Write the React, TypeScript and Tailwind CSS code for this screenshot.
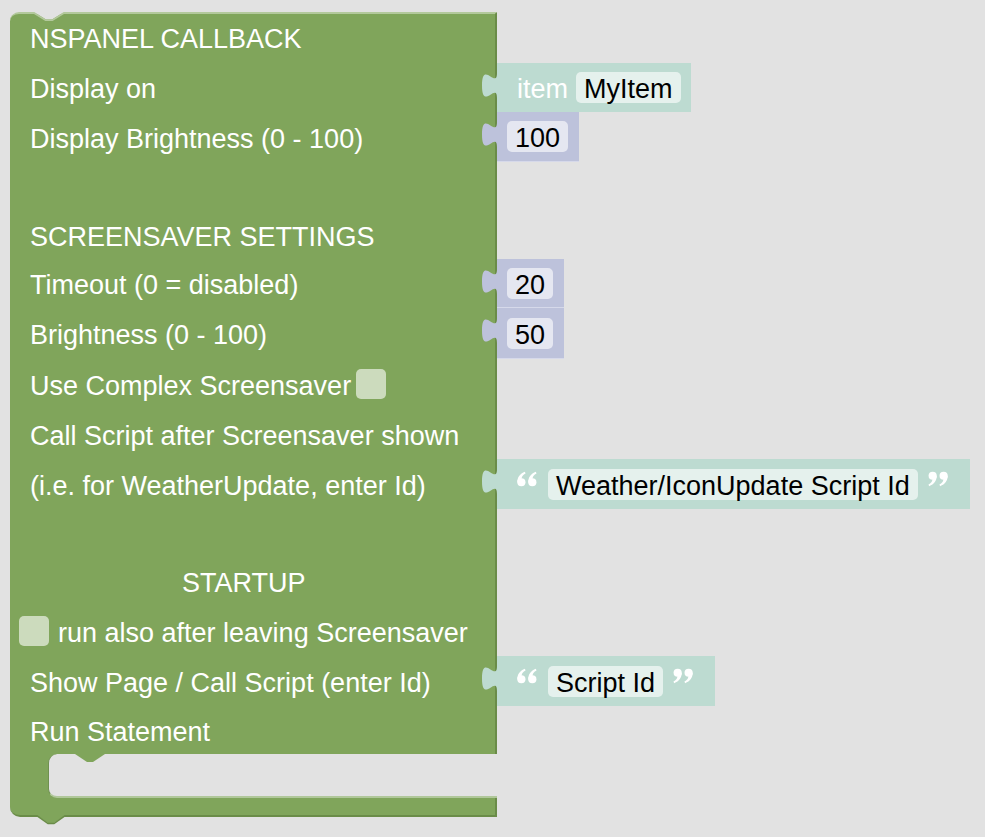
import type { ReactNode } from "react";

const TEXT_BG = "#bddbd1";
const NUM_BG = "#bdc2db";

// puzzle tab that sits on the parent's right edge
const Tab = ({ fill }: { fill: string }) => (
  <svg
    className="absolute left-[-15px] top-[10px]"
    width="15"
    height="25"
    viewBox="0 0 8 15"
    preserveAspectRatio="none"
  >
    <path d="M8,0 c0,10 -8,-8 -8,7.5 s8,-2.5 8,7.5 Z" fill={fill} />
  </svg>
);

// blockly draws the quotes as small images
const QuoteMark = () => (
  <>
    <circle cx="4.6" cy="11.4" r="4.3" />
    <path d="M0.3,11.6 C0.2,6.4 3,2.4 8.3,0.4 L9,2.2 C6.4,3.6 5,5.4 4.9,7.4 Z" />
  </>
);

const Quote = ({ open, className = "" }: { open?: boolean; className?: string }) => (
  <svg className={`mt-[12px] self-start ${className}`} width="20" height="16" viewBox="0 0 21 16" fill="white">
    <g transform={open ? undefined : "rotate(180 10.5 8)"}>
      <QuoteMark />
      <g transform="translate(11.5 0)">
        <QuoteMark />
      </g>
    </g>
  </svg>
);

const Field = ({ children, bg }: { children: ReactNode; bg: string }) => (
  <span className={`flex h-[31px] items-center rounded-[5px] px-[8px] pt-[4px] text-black ${bg}`}>
    {children}
  </span>
);

const ItemBlock = ({ name }: { name: string }) => (
  <div className="relative flex h-full items-center gap-[8px] bg-[#bddbd1] pt-[4px] pr-[10px] pl-5">
    <Tab fill={TEXT_BG} />
    <span className="text-white">item</span>
    <span className="-mt-[4px]">
      <Field bg="bg-[#e5f1ed]">{name}</Field>
    </span>
  </div>
);

const NumberBlock = ({ value }: { value: string }) => (
  <div className="relative flex h-full items-center border-b border-b-[#d6d9ea] bg-[#bdc2db] pr-[11px] pl-[10px]">
    <Tab fill={NUM_BG} />
    <Field bg="bg-[#e5e7f1]">{value}</Field>
  </div>
);

const TextBlock = ({ value }: { value: string }) => (
  <div className="relative flex h-full items-center bg-[#bddbd1] pr-[22px] pl-5">
    <Tab fill={TEXT_BG} />
    <Quote open className="mr-[11px]" />
    <Field bg="bg-[#e5f1ed]">{value}</Field>
    <Quote className="ml-[10px]" />
  </div>
);

const Checkbox = () => (
  <span className="block h-[30px] w-[30px] shrink-0 rounded-[5px] bg-[#ccdbbd]" />
);

const Row = ({
  h,
  children,
  input,
  className = "pt-[4px] pl-5",
}: {
  h: string;
  children?: ReactNode;
  input?: ReactNode;
  className?: string;
}) => (
  <div className={`flex ${h}`}>
    <div
      className={`flex w-[487px] shrink-0 items-center border-r-2 border-r-[#6a8c48] bg-[#80a55b] text-white ${className}`}
    >
      {children}
    </div>
    {input}
  </div>
);

export default function App() {
  return (
    <div className="min-h-screen w-full bg-[#e2e2e2] pt-[12px] pl-[10px] font-['Liberation_Sans',Arial,sans-serif] text-[27px] leading-none">
      <div className="relative flex w-fit flex-col">
        {/* top notch */}
        <svg className="absolute top-0 left-[24px]" width="30" height="9" viewBox="0 0 30 9">
          <polygon points="0,0 12,7.5 18,7.5 30,0" fill="#e2e2e2" />
          <polyline points="0,1 12,8.5 18,8.5 30,1" fill="none" stroke="#b3c99c" strokeWidth="1.5" />
        </svg>

        <Row h="h-[51px]" className="rounded-tl-[9px] border-t-2 border-t-[#b3c99c] pt-[2px] pl-5">
          NSPANEL CALLBACK
        </Row>
        <Row h="h-[49px]" input={<ItemBlock name="MyItem" />}>
          Display on
        </Row>
        <Row h="h-[50px]" input={<NumberBlock value="100" />}>
          Display Brightness (0 - 100)
        </Row>
        <Row h="h-[49px]" />
        <Row h="h-[48px]">SCREENSAVER SETTINGS</Row>
        <Row h="h-[49px]" input={<NumberBlock value="20" />}>
          Timeout (0 = disabled)
        </Row>
        <Row h="h-[51px]" input={<NumberBlock value="50" />}>
          Brightness (0 - 100)
        </Row>
        <Row h="h-[50px]">
          <span>Use Complex Screensaver</span>
          <span className="-mt-[4px] ml-[5px]">
            <Checkbox />
          </span>
        </Row>
        <Row h="h-[50px]">Call Script after Screensaver shown</Row>
        <Row h="h-[50px]" input={<TextBlock value="Weather/IconUpdate Script Id" />}>
          (i.e. for WeatherUpdate, enter Id)
        </Row>
        <Row h="h-[48px]" />
        <Row h="h-[49px]" className="pt-[4px] pl-[172px]">
          STARTUP
        </Row>
        <Row h="h-[50px]" className="gap-[9px] pl-[9px]">
          <Checkbox />
          <span className="pt-[4px]">run also after leaving Screensaver</span>
        </Row>
        <Row h="h-[50px]" input={<TextBlock value="Script Id" />}>
          Show Page / Call Script (enter Id)
        </Row>
        <Row h="h-[48px]">Run Statement</Row>

        {/* statement input */}
        <div className="flex h-[44px] w-[487px] bg-[#80a55b]">
          <div className="w-[38px] shrink-0" />
          <div className="relative flex-1 rounded-l-[9px] border-b-2 border-l border-b-[#b0c79a] border-l-[#6f9150] bg-[#e2e2e2]">
            <svg className="absolute top-0 left-[26px]" width="30" height="9" viewBox="0 0 30 9">
              <polygon points="0,0 12,8 18,8 30,0" fill="#80a55b" />
            </svg>
          </div>
        </div>

        {/* bottom bar */}
        <div className="relative h-[19px] w-[487px] rounded-bl-[10px] border-r-2 border-b-2 border-r-[#6a8c48] border-b-[#6a8c48] bg-[#80a55b]">
          <svg className="absolute top-[17px] left-[26px]" width="30" height="10" viewBox="0 0 30 10">
            <polygon points="0,0 12,8 18,8 30,0" fill="#80a55b" />
            <polyline points="0,0 12,8.5 18,8.5 30,0" fill="none" stroke="#6a8c48" strokeWidth="1.5" />
          </svg>
        </div>
      </div>
    </div>
  );
}
